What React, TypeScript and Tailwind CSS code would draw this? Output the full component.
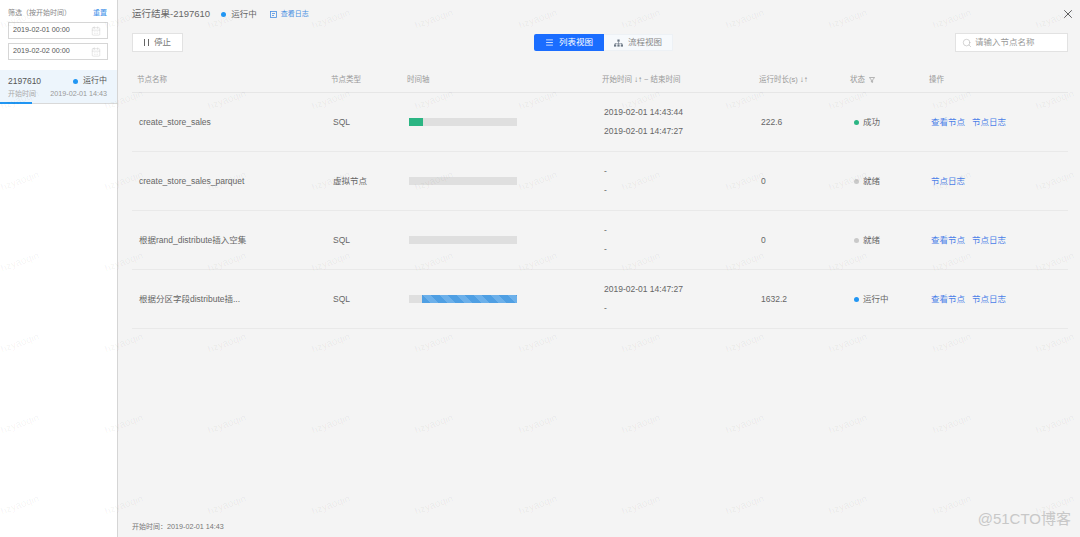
import { CalendarDays, Menu, Search, X } from 'lucide-react'

const FONT = 'font-["Liberation_Sans","Noto_Sans_CJK_SC",sans-serif]'
const COLS = 'grid grid-cols-[194px_76px_195px_157px_91px_79px_1fr] items-center'

type Status = 'success' | 'ready' | 'running'

interface NodeRow {
  name: string
  type: string
  start: string
  end: string
  duration: string
  status: Status
  canView: boolean
}

const ROWS: NodeRow[] = [
  { name: 'create_store_sales', type: 'SQL', start: '2019-02-01 14:43:44', end: '2019-02-01 14:47:27', duration: '222.6', status: 'success', canView: true },
  { name: 'create_store_sales_parquet', type: '虚拟节点', start: '-', end: '-', duration: '0', status: 'ready', canView: false },
  { name: '根据rand_distribute插入空集', type: 'SQL', start: '-', end: '-', duration: '0', status: 'ready', canView: true },
  { name: '根据分区字段distribute插...', type: 'SQL', start: '2019-02-01 14:47:27', end: '-', duration: '1632.2', status: 'running', canView: true },
]

const STATUS = {
  success: { label: '成功', dot: 'bg-[#2bb583]' },
  ready: { label: '就绪', dot: 'bg-[#c9c9c9]' },
  running: { label: '运行中', dot: 'bg-[#2196f3]' },
}

function DateInput({ value }: { value: string }) {
  return (
    <div className="flex h-[17px] items-center justify-between border border-[#d6d6d6] bg-white pl-[4px] pr-[6px] text-[7.2px] text-[#555]">
      <span>{value}</span>
      <CalendarDays size={10} strokeWidth={1} className="text-[#c4c4c4]" />
    </div>
  )
}

function Timeline({ status }: { status: Status }) {
  return (
    <div className="flex h-2 w-[108px] bg-[#dfdfdf]">
      {status === 'success' && <div className="w-[14px] bg-[#2bb583]" />}
      {status === 'running' && (
        <div className="ml-[13px] flex-1 bg-[repeating-linear-gradient(45deg,#4f9fe3_0px,#4f9fe3_6px,#6cb0ea_6px,#6cb0ea_12px)]" />
      )}
    </div>
  )
}

function SortArrows() {
  return <span className="ml-[2px] text-[8px] text-[#888]">↓↑</span>
}

function Watermarks() {
  // the tiled user name that sits over the whole page
  const tiles = Array.from({ length: 77 }, (_, i) => i)
  return (
    <div className="pointer-events-none absolute left-[-1px] top-[10px] grid grid-cols-[repeat(11,103.5px)] auto-rows-[81px]">
      {tiles.map(i => (
        <span key={i} className="h-[18px] w-[42px] origin-center -rotate-[20deg] whitespace-nowrap text-center text-[10px] leading-[18px] text-black/[0.055]">
          hzyaoqin
        </span>
      ))}
    </div>
  )
}

export default function App() {
  return (
    <div className={`relative flex h-[537px] w-[1080px] overflow-hidden bg-[#f4f4f4] ${FONT}`}>
      {/* Run list */}
      <aside className="h-full w-[118px] shrink-0 border-r border-[#d5d5d5] bg-white">
        <div className="flex h-[22px] items-center justify-between pl-2 pr-[10px] pt-[5px] text-[7px]">
          <span className="text-[#888]">筛选（按开始时间）</span>
          <span className="text-[#3b8fe8]">重置</span>
        </div>
        <div className="flex flex-col gap-[4px] pl-2 pr-[9px]">
          <DateInput value="2019-02-01 00:00" />
          <DateInput value="2019-02-02 00:00" />
        </div>
        <div className="relative mt-[10px] h-[34px] border-b border-[#d9d9d9] bg-[#edf5fc] pl-2 pr-[10px]">
          <div className="flex items-center justify-between pt-[5px] text-[8.5px] leading-[12px] text-[#555]">
            <span>2197610</span>
            <span className="flex items-center gap-[5px] text-[8px]">
              <i className="size-[5px] rounded-full bg-[#2196f3]" />
              运行中
            </span>
          </div>
          <div className="mt-[2px] flex items-center justify-between text-[7px] leading-[10px] text-[#aaa]">
            <span>开始时间</span>
            <span className="text-[7.2px] text-[#999]">2019-02-01 14:43</span>
          </div>
          <div className="absolute -bottom-px left-0 h-[2px] w-8 bg-[#2196f3]" />
        </div>
      </aside>

      {/* Run result */}
      <main className="flex h-full flex-1 flex-col pl-[14px] pr-[12px]">
        <header className="flex h-[28px] items-center">
          <span className="text-[9.5px] text-[#666]">运行结果-2197610</span>
          <i className="ml-[11px] size-[5px] rounded-full bg-[#2196f3]" />
          <span className="ml-[5px] text-[8.5px] text-[#666]">运行中</span>
          <svg className="ml-[13px]" width="7" height="7" viewBox="0 0 7 7" fill="none" stroke="#4a90e2" strokeWidth="0.8">
            <rect x="0.5" y="0.5" width="6" height="6" />
            <path d="M2 2.5h3M2 4.5h2" />
          </svg>
          <span className="ml-[4px] text-[7px] text-[#4a90e2]">查看日志</span>
          <X size={14} strokeWidth={1.6} className="ml-auto mr-[-7px] text-[#555]" />
        </header>

        <div className="mt-[5px] flex h-[19px] items-center">
          <button className="flex h-[19px] w-[51px] items-center justify-center gap-[5px] border border-[#e2e2e2] bg-white text-[8.5px] text-[#777]">
            <span className="flex gap-[3px]">
              <i className="h-[7px] w-px bg-[#666]" />
              <i className="h-[7px] w-px bg-[#666]" />
            </span>
            停止
          </button>
          <div className="ml-[351px] flex h-[17px] text-[8.5px]">
            <div className="flex w-[70px] items-center justify-center gap-[5px] rounded-l-[2px] bg-[#1a6dff] text-white">
              <Menu size={9} strokeWidth={2} />
              列表视图
            </div>
            <div className="flex w-[69px] items-center justify-center gap-[5px] border border-l-0 border-[#edf1f5] bg-[#f6f9fc] text-[#888]">
              <svg width="9" height="8" viewBox="0 0 9 8" fill="#6b7785">
                <rect x="3.4" y="0.5" width="2.2" height="2.2" />
                <rect x="0" y="5.4" width="2.2" height="2.2" />
                <rect x="3.4" y="5.4" width="2.2" height="2.2" />
                <rect x="6.8" y="5.4" width="2.2" height="2.2" />
                <path d="M4.2 2.7h.6v1.2H8.2v1.5h-.6V4.5H4.8v.9h-.6v-.9H1.4v.9H.8V3.9h3.4z" />
              </svg>
              流程视图
            </div>
          </div>
          <div className="ml-auto flex h-[19px] w-[113px] items-center gap-[3px] border border-[#e2e2e2] bg-white pl-[6px] text-[8.5px] text-[#999]">
            <Search size={10} strokeWidth={1.2} className="text-[#aaa]" />
            请输入节点名称
          </div>
        </div>

        <section className="mt-[15px]">
          <div className={`${COLS} h-[26px] border-b border-[#e6e6e6] pl-[5px] text-[7.5px] text-[#999]`}>
            <span>节点名称</span>
            <span>节点类型</span>
            <span>时间轴</span>
            <span className="flex items-center">
              开始时间
              <SortArrows />
              <span className="mx-[2px]">~</span>
              结束时间
            </span>
            <span className="flex items-center">
              运行时长(s)
              <SortArrows />
            </span>
            <span className="flex items-center gap-[4px]">
              状态
              <svg width="6" height="6" viewBox="0 0 6 6" fill="none" stroke="#999" strokeWidth="0.7">
                <path d="M.4.5h5.2L3.6 3v2.4L2.4 5V3z" />
              </svg>
            </span>
            <span>操作</span>
          </div>
          {ROWS.map(row => (
            <div key={row.name} className={`${COLS} h-[59px] border-b border-[#e9e9e9] pl-[7px] text-[8.5px] text-[#666]`}>
              <span>{row.name}</span>
              <span>{row.type}</span>
              <Timeline status={row.status} />
              <div className="flex flex-col gap-[8px] leading-[11px]">
                <span>{row.start}</span>
                <span>{row.end}</span>
              </div>
              <span>{row.duration}</span>
              <span className="flex items-center gap-[4px] pl-[2px]">
                <i className={`size-[5px] rounded-full ${STATUS[row.status].dot}`} />
                {STATUS[row.status].label}
              </span>
              <span className="flex gap-[7px] text-[#4a7fe8]">
                {row.canView && <span>查看节点</span>}
                <span>节点日志</span>
              </span>
            </div>
          ))}
        </section>

        <footer className="mt-auto pb-[5px] text-[7px] leading-[10px] text-[#777]">
          开始时间：<span className="text-[7.2px]">2019-02-01 14:43</span>
        </footer>
      </main>

      <Watermarks />
      <span className="pointer-events-none absolute bottom-[9px] right-[9px] text-[15px] leading-[18px] text-[#c8c8c8]">@51CTO博客</span>
    </div>
  )
}
